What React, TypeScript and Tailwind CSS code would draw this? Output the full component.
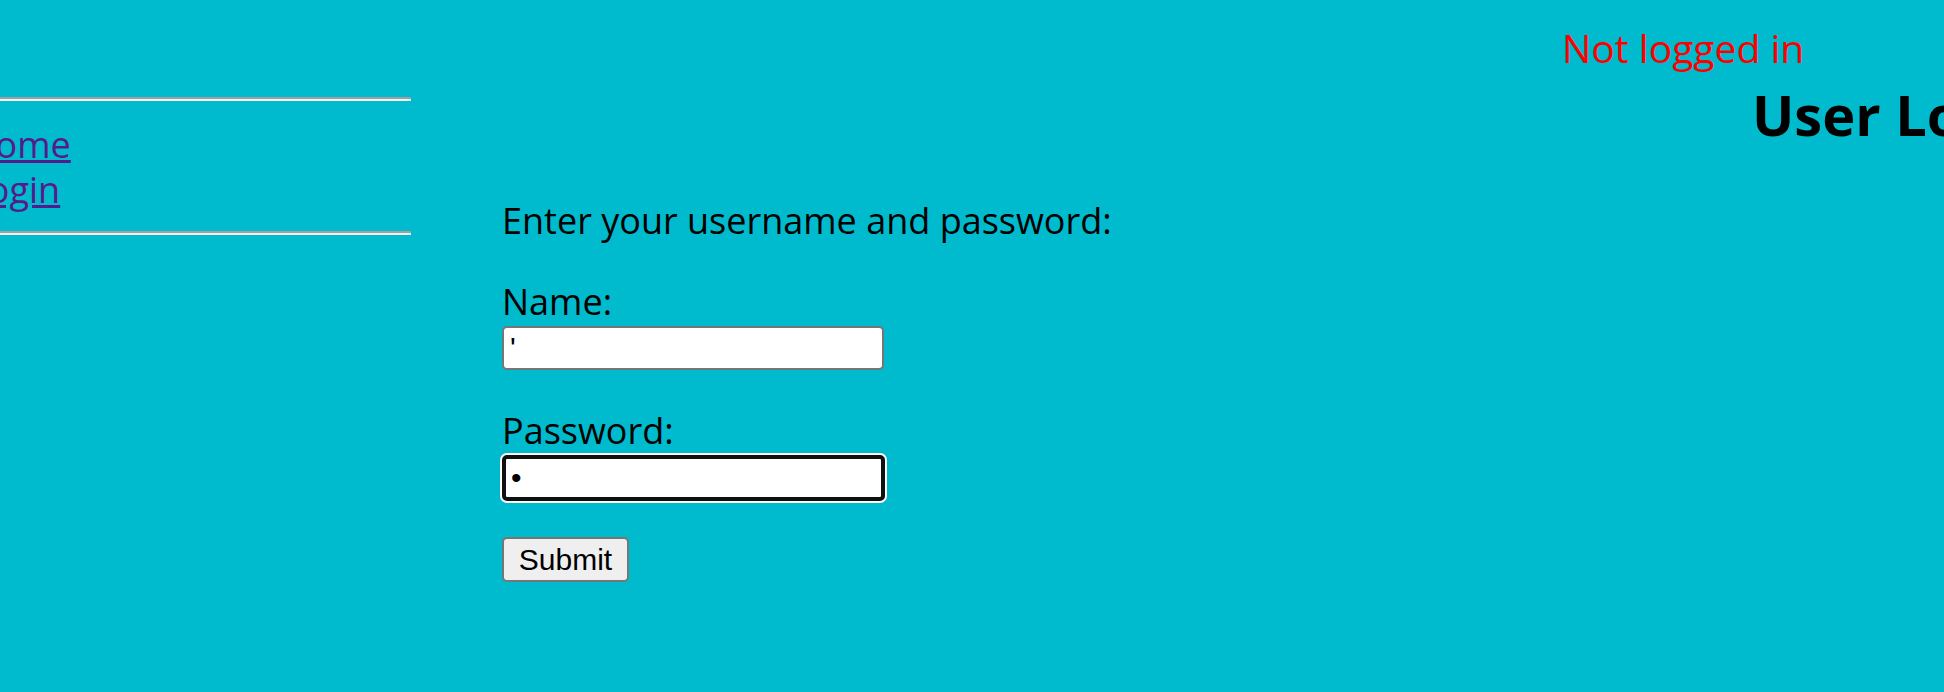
export default function App() {
  return (
    <div className="h-[692px] w-[1944px] overflow-hidden bg-[#00bacd] font-['Open_Sans',sans-serif] text-[36px] leading-[48px] text-black">
      {/* status line */}
      <p className="whitespace-nowrap pl-[1562px] pt-[24px] text-[39px] text-[#ff0000]">Not logged in</p>

      <div className="flex">
        {/* side navigation, partly scrolled out to the left */}
        <nav className="-ml-[60px] mt-[25px] w-[471px] shrink-0">
          <div className="h-0 border-t-2 border-b-2 border-t-[#a0a0a0] border-b-[#f2f2f2]" />
          <ul className="mt-[21px] pl-[29px] leading-[45px]">
            <li>
              <a href="#" className="text-[#551a8b] underline">
                Home
              </a>
            </li>
            <li>
              <a href="#" className="text-[#551a8b] underline">
                Login
              </a>
            </li>
          </ul>
          <div className="mt-[19px] h-0 border-t-2 border-b-2 border-t-[#a0a0a0] border-b-[#f2f2f2]" />
        </nav>

        {/* main content */}
        <main className="ml-[91px] flex flex-col">
          <h1 className="mt-[10px] whitespace-nowrap pl-[1250px] text-[56px] font-bold leading-[64px]">
            User Login
          </h1>
          <p className="mt-[51px] whitespace-nowrap">Enter your username and password:</p>

          <form className="flex flex-col items-start" onSubmit={(e) => e.preventDefault()}>
            <label htmlFor="name" className="mt-[33px]">
              Name:
            </label>
            <input
              id="name"
              type="text"
              defaultValue="'"
              className="h-[44px] w-[382px] rounded-[5px] border-2 border-[#767676] bg-white px-[6px] font-['Liberation_Sans',Arial,sans-serif] text-[30px] text-black outline-none"
            />

            <label htmlFor="password" className="mt-[37px]">
              Password:
            </label>
            <input
              id="password"
              type="password"
              defaultValue="a"
              className="h-[46px] w-[383px] rounded-[5px] border-[4px] border-[#101010] bg-white px-[5px] font-['Liberation_Sans',Arial,sans-serif] text-[30px] text-black shadow-[0_0_0_2px_#ffffff] outline-none"
            />

            <button
              type="submit"
              className="mt-[36px] h-[45px] w-[127px] rounded-[5px] border-2 border-[#767676] bg-[#efefef] font-['Liberation_Sans',Arial,sans-serif] text-[30px] leading-none text-black"
            >
              Submit
            </button>
          </form>
        </main>
      </div>
    </div>
  );
}
